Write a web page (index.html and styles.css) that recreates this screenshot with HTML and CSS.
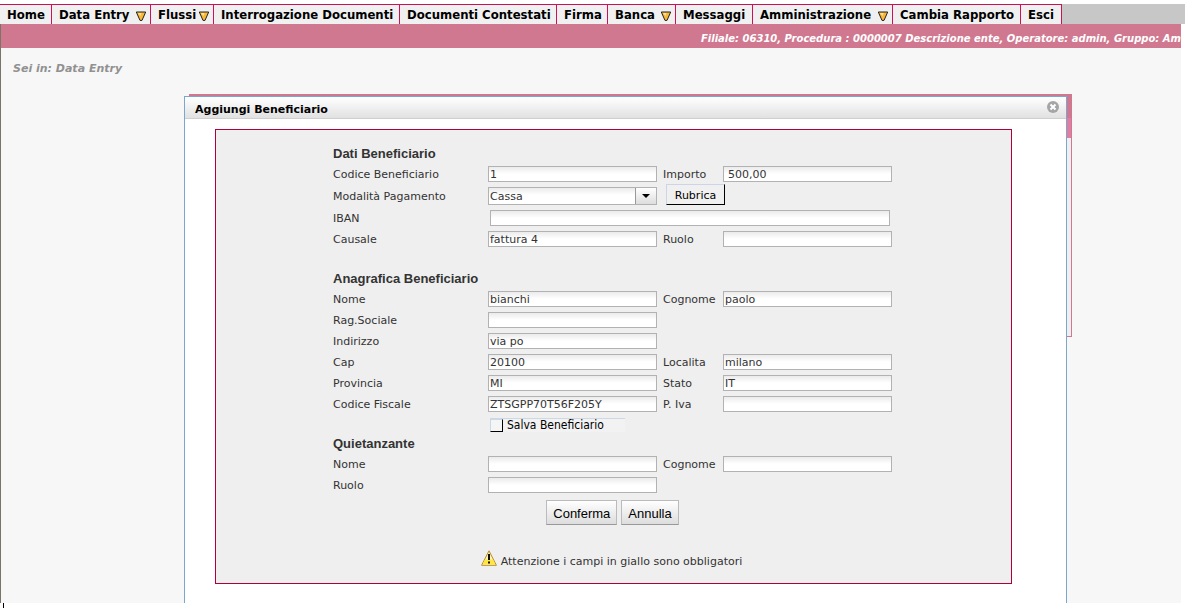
FILE: index.html
```html
<!DOCTYPE html>
<html lang="it">
<head>
<meta charset="utf-8">
<title>Aggiungi Beneficiario</title>
<link rel="stylesheet" href="styles.css">
</head>
<body>
<svg class="defs" width="0" height="0" aria-hidden="true">
  <symbol id="arrow" viewBox="0 0 10 10">
    <path d="M0.3 1h9.400L6 9.400H4z" fill="#fbb836" stroke="#222" stroke-width="1"/>
    <path d="M2 2h3.500L4.500 5z" fill="#ffe39a"/>
  </symbol>
</svg>
<nav class="menu">
  <a href="#">Home</a>
  <a href="#">Data Entry <svg class="arrow"><use href="#arrow"/></svg></a>
  <a href="#">Flussi <svg class="arrow"><use href="#arrow"/></svg></a>
  <a href="#">Interrogazione Documenti</a>
  <a href="#">Documenti Contestati</a>
  <a href="#">Firma</a>
  <a href="#">Banca <svg class="arrow"><use href="#arrow"/></svg></a>
  <a href="#">Messaggi</a>
  <a href="#">Amministrazione <svg class="arrow"><use href="#arrow"/></svg></a>
  <a href="#">Cambia Rapporto</a>
  <a href="#">Esci</a>
</nav>
<div class="page">
  <div class="status">Filiale: 06310, Procedura : 0000007 Descrizione ente, Operatore: admin, Gruppo: Am</div>
  <p class="crumb">Sei in: Data Entry</p>
  <div class="panel"><div class="panel-head"></div><div class="panel-sub"></div></div>

  <section class="dialog" role="dialog" aria-labelledby="dialog-title">
    <header class="dialog-head">
      <h1 id="dialog-title">Aggiungi Beneficiario</h1>
      <button class="close" type="button" aria-label="Chiudi">
        <svg viewBox="0 0 12 12"><circle cx="6" cy="6" r="6" fill="#a5a5a5"/><path d="M3.5 3.5l5 5M8.5 3.5l-5 5" stroke="#fff" stroke-width="2"/></svg>
      </button>
    </header>
    <form class="box">
      <div class="fields">
        <h2>Dati Beneficiario</h2>
        <div class="row">
          <label for="codice">Codice Beneficiario</label><input id="codice" type="text" value="1">
          <label class="second" for="importo">Importo</label><input id="importo" class="amount" type="text" value="500,00">
        </div>
        <div class="row tall">
          <label for="modalita">Modalità Pagamento</label>
          <span class="combo">
            <select id="modalita"><option>Cassa</option></select>
            <span class="combo-button"><svg viewBox="0 0 8 4"><path d="M0 0h8L4 4z"/></svg></span>
          </span>
          <button class="rubrica" type="button">Rubrica</button>
        </div>
        <div class="row">
          <label for="iban">IBAN</label><input id="iban" class="wide" type="text">
        </div>
        <div class="row">
          <label for="causale">Causale</label><input id="causale" type="text" value="fattura 4">
          <label class="second" for="ruolo">Ruolo</label><input id="ruolo" type="text">
        </div>

        <h2 class="spaced">Anagrafica Beneficiario</h2>
        <div class="row">
          <label for="nome">Nome</label><input id="nome" type="text" value="bianchi">
          <label class="second" for="cognome">Cognome</label><input id="cognome" type="text" value="paolo">
        </div>
        <div class="row"><label for="ragione">Rag.Sociale</label><input id="ragione" type="text"></div>
        <div class="row"><label for="indirizzo">Indirizzo</label><input id="indirizzo" type="text" value="via po"></div>
        <div class="row">
          <label for="cap">Cap</label><input id="cap" type="text" value="20100">
          <label class="second" for="localita">Localita</label><input id="localita" type="text" value="milano">
        </div>
        <div class="row">
          <label for="provincia">Provincia</label><input id="provincia" type="text" value="MI">
          <label class="second" for="stato">Stato</label><input id="stato" type="text" value="IT">
        </div>
        <div class="row">
          <label for="fiscale">Codice Fiscale</label><input id="fiscale" type="text" value="ZTSGPP70T56F205Y">
          <label class="second" for="iva">P. Iva</label><input id="iva" type="text">
        </div>
        <div class="row short">
          <label class="save"><input type="checkbox">Salva Beneficiario</label>
        </div>

        <h2>Quietanzante</h2>
        <div class="row">
          <label for="q-nome">Nome</label><input id="q-nome" type="text">
          <label class="second" for="q-cognome">Cognome</label><input id="q-cognome" type="text">
        </div>
        <div class="row"><label for="q-ruolo">Ruolo</label><input id="q-ruolo" type="text"></div>
      </div>
      <div class="actions">
        <button type="submit">Conferma</button>
        <button type="button">Annulla</button>
      </div>
      <p class="notice">
        <svg viewBox="0 0 16 16"><path d="M8 .8L15.4 15.3H.6z" fill="#fff6b0" stroke="#b98a2e" stroke-linejoin="round"/><path d="M4 9.500h8l2.500 5h-13z" fill="#ffe640"/><path d="M7 4h2v6H7zM7 11.500h2v2H7z" fill="#111"/></svg>
        Attenzione i campi in giallo sono obbligatori
      </p>
    </form>
  </section>
</div>
<div class="caret"></div>
</body>
</html>
```
FILE: styles.css
```css
* { box-sizing: border-box; }
body {
  margin: 0;
  padding-top: 4px;
  background: #fff;
  color: #333;
  font-family: "DejaVu Sans", sans-serif;
  font-size: 11px;
  overflow: hidden;
}
.defs { display: block; }
h1, h2, p { margin: 0; }
button, input, select { font: inherit; color: inherit; margin: 0; border-radius: 0; }

.menu {
  display: grid;
  grid-template-columns: 52px 99px 63px 186px 157px 51px 68px 77px 140px 128px 41px;
  height: 20px;
  background: #c7c7c7;
}
.menu a {
  display: flex;
  justify-content: space-between;
  padding: 0 4px 0 7px;
  border-top: 1px solid #cc1155;
  border-right: 1px solid #cc1155;
  background: #f0f0f0;
  color: #000;
  font: bold 13px/20px "DejaVu Sans Condensed", "DejaVu Sans", sans-serif;
  font-stretch: condensed;
  text-decoration: none;
  white-space: nowrap;
}
.arrow { width: 10px; height: 10px; margin-top: 6px; flex: none; }

.page {
  position: relative;
  height: 579px;
  margin-right: 4px;
  border-left: 1px solid #7b7568;
  background: #f7f7f7;
}
.status {
  height: 24px;
  overflow: hidden;
  background: #d07890;
  color: #fff;
  font: italic bold 10px/29px "DejaVu Sans", sans-serif;
  text-align: right;
  white-space: nowrap;
}
.crumb {
  height: 46px;
  padding-left: 12px;
  color: #919191;
  font: italic bold 11px/41px "DejaVu Sans", sans-serif;
}
.panel {
  height: 243px;
  margin: 0 109px 0 188px;
  border: 1px solid #d07890;
  background: #efefef;
}
.panel-head { height: 23px; background: #d07890; }
.panel-sub { height: 20px; background: #df7ea0; }

.dialog {
  position: absolute;
  top: 72px;
  bottom: 0;
  left: 183px;
  right: 114px;
  border: 1px solid #7aa8cc;
  border-bottom: 0;
  background: #fff;
}
.dialog-head {
  display: flex;
  justify-content: space-between;
  height: 22px;
  padding: 0 7px 0 10px;
  border-bottom: 1px solid #cfcfcf;
  background: linear-gradient(#fff, #e1e1e1);
}
.dialog-head h1 { color: #000; font-size: 11px; line-height: 25px; }
.close { width: 12px; height: 12px; margin-top: 4px; padding: 0; border: 0; background: none; }
.close svg { display: block; }

.box {
  height: 455px;
  margin: 10px 54px 0 30px;
  padding-top: 13px;
  border: 1px solid #b0003c;
  background: #efefef;
}
.fields { width: 561px; margin: 0 auto; }
.fields h2 { height: 21px; font: bold 13px/21px "Liberation Sans", Arial, sans-serif; }
.fields h2.spaced { margin-top: 18px; }
.row {
  display: grid;
  grid-template-columns: 155px 169px 66px 169px;
  align-items: start;
  height: 21px;
  padding-top: 2px;
}
.row.tall { height: 23px; }
.row.short { height: 18px; }
.row label { line-height: 17px; white-space: nowrap; }
.row .second { padding-left: 6px; }
.row.tall > label { line-height: 19px; }
.row input[type="text"] {
  width: 100%;
  height: 16px;
  padding: 0 1px;
  border: 1px solid #b2b2b2;
  background: linear-gradient(#ebebeb, #fff 7px);
}
.row input.amount[type="text"] { padding-left: 4px; }
.row input.wide[type="text"] { grid-column: 2 / 5; width: 400px; margin-left: 2px; }
.combo { position: relative; display: block; height: 18px; }
.combo select {
  width: 100%;
  height: 18px;
  padding: 0 24px 0 1px;
  border: 1px solid #b2b2b2;
  background: linear-gradient(#ebebeb, #fff 7px);
  appearance: none;
}
.combo-button {
  position: absolute;
  top: 1px;
  right: 1px;
  display: grid;
  place-items: center;
  width: 21px;
  height: 16px;
  border-left: 1px solid #999;
  background: linear-gradient(#fff, #ddd);
  pointer-events: none;
}
.combo-button svg { width: 8px; height: 4px; }
.rubrica {
  width: 59px;
  height: 21px;
  margin: -3px 0 0 9px;
  padding: 1px 0 0;
  border: 1px solid #000;
  border-color: #ccd4e8 #000 #000 #ccd4e8;
  background: #f0f0f0;
  color: #000;
}
.row .save {
  grid-column: 2;
  display: flex;
  gap: 4px;
  width: 135px;
  height: 14px;
  margin: 1px 0 0 2px;
  border-top: 1px solid #cbd8e6;
  background: #f2f2f2;
  color: #000;
  font-family: "DejaVu Sans Condensed", "DejaVu Sans", sans-serif;
  font-size: 12px;
  font-stretch: condensed;
  line-height: 13px;
}
.save input {
  width: 13px;
  height: 13px;
  border: 1px solid #000;
  border-color: #cbd8e6 #000 #000 #cbd8e6;
  background: #f5f5f5;
  appearance: none;
}
.actions { display: flex; justify-content: center; gap: 4px; margin-top: 4px; padding-right: 2px; }
.actions button {
  height: 25px;
  padding: 1px 6px 0;
  border: 1px solid #bbb;
  border-bottom-color: #999;
  background: linear-gradient(#fff, #ddd);
  color: #000;
  font: 13px "Liberation Sans", Arial, sans-serif;
}
.notice { display: flex; justify-content: center; gap: 4px; margin-top: 25px; padding-right: 4px; line-height: 24px; }
.notice svg { width: 16px; height: 16px; }
.caret { width: 1px; height: 5px; margin-left: 3px; background: #000; }
```
